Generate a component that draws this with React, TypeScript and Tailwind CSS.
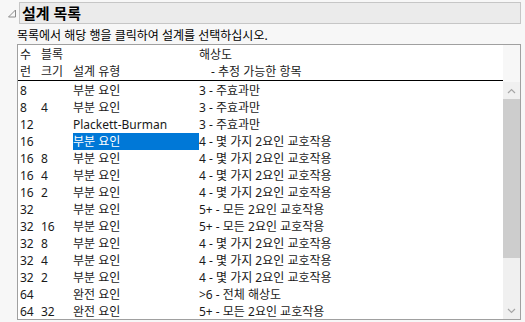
import React from "react"

const rows: [string, string, string, string][] = [
  ["8", "", "부분 요인", "3 - 주효과만"],
  ["8", "4", "부분 요인", "3 - 주효과만"],
  ["12", "", "Plackett-Burman", "3 - 주효과만"],
  ["16", "", "부분 요인", "4 - 몇 가지 2요인 교호작용"],
  ["16", "8", "부분 요인", "4 - 몇 가지 2요인 교호작용"],
  ["16", "4", "부분 요인", "4 - 몇 가지 2요인 교호작용"],
  ["16", "2", "부분 요인", "4 - 몇 가지 2요인 교호작용"],
  ["32", "", "부분 요인", "5+ - 모든 2요인 교호작용"],
  ["32", "16", "부분 요인", "5+ - 모든 2요인 교호작용"],
  ["32", "8", "부분 요인", "4 - 몇 가지 2요인 교호작용"],
  ["32", "4", "부분 요인", "4 - 몇 가지 2요인 교호작용"],
  ["32", "2", "부분 요인", "4 - 몇 가지 2요인 교호작용"],
  ["64", "", "완전 요인", ">6 - 전체 해상도"],
  ["64", "32", "완전 요인", "5+ - 모든 2요인 교호작용"],
]

const selected = 3

function Chevron({ up }: { up?: boolean }) {
  return (
    <svg width="9" height="6" viewBox="0 0 9 6" className="block">
      <path
        d={up ? "M1 5 L4.5 1.5 L8 5" : "M1 1 L4.5 4.5 L8 1"}
        fill="none"
        stroke="#a6a6a6"
        strokeWidth="1.2"
      />
    </svg>
  )
}

export default function App() {
  return (
    <div
      className="h-[322px] w-[525px] overflow-hidden bg-[#f7f7f7] text-[12px] text-[#1a1a1a]"
      style={{ fontFamily: '"Noto Sans", "Noto Sans CJK KR", sans-serif' }}
    >
      {/* outline header */}
      <div className="flex items-center pt-[2px]">
        <div className="flex w-[19px] justify-center pl-[5px]">
          <svg width="10" height="9" viewBox="0 0 10 9">
            <path d="M8.5 1 L8.5 8 L1.5 8 Z" fill="none" stroke="#8a8a8a" strokeWidth="1" />
          </svg>
        </div>
        <div className="flex h-[22px] w-[502px] items-center border border-[#c6c6c6] bg-[#ebebeb] pl-[2px] text-[15px] font-bold leading-none text-black">
          설계 목록
        </div>
      </div>

      <div className="pl-[17px] pt-[3px]">
        <div className="h-[17px] leading-[17px] text-black">목록에서 해당 행을 클릭하여 설계를 선택하십시오.</div>

        <div className="mt-[0px] flex h-[276px] w-[504px] border border-[#a0a0a0] bg-white">
          <div className="flex-1 overflow-hidden">
            <div className="border-b border-black pl-[2px] pt-[1px]">
              <div className="grid h-[17px] grid-cols-[21px_32px_126px_1fr] leading-[17px]">
                <span>수</span>
                <span>블록</span>
                <span></span>
                <span>해상도</span>
              </div>
              <div className="grid h-[17px] grid-cols-[21px_32px_126px_1fr] leading-[17px]">
                <span>런</span>
                <span>크기</span>
                <span>설계 유형</span>
                <span className="pl-[12px]">- 추정 가능한 항목</span>
              </div>
            </div>
            <div className="pl-[2px] pt-[1px]">
              {rows.map(([runs, block, type, res], i) => (
                <div key={i} className="grid h-[17px] grid-cols-[21px_32px_126px_1fr] leading-[17px]">
                  <span>{runs}</span>
                  <span>{block}</span>
                  <span className={i === selected ? "bg-[#0078d7] text-white" : ""}>{type}</span>
                  <span className="whitespace-nowrap">{res}</span>
                </div>
              ))}
            </div>
          </div>

          <div className="flex w-[17px] flex-col">
            <div className="h-[37px] bg-[#f7f7f7]" />
            <div className="flex flex-1 flex-col bg-[#f0f0f0]">
              <div className="flex h-[17px] items-center justify-center">
                <Chevron up />
              </div>
              <div className="h-[159px] bg-[#cdcdcd]" />
              <div className="flex-1" />
              <div className="flex h-[17px] items-center justify-center">
                <Chevron />
              </div>
            </div>
          </div>
        </div>
        <div className="ml-[2px] mt-[4px] h-px w-[60px] bg-[#9a9a9a]" />
      </div>
    </div>
  )
}
